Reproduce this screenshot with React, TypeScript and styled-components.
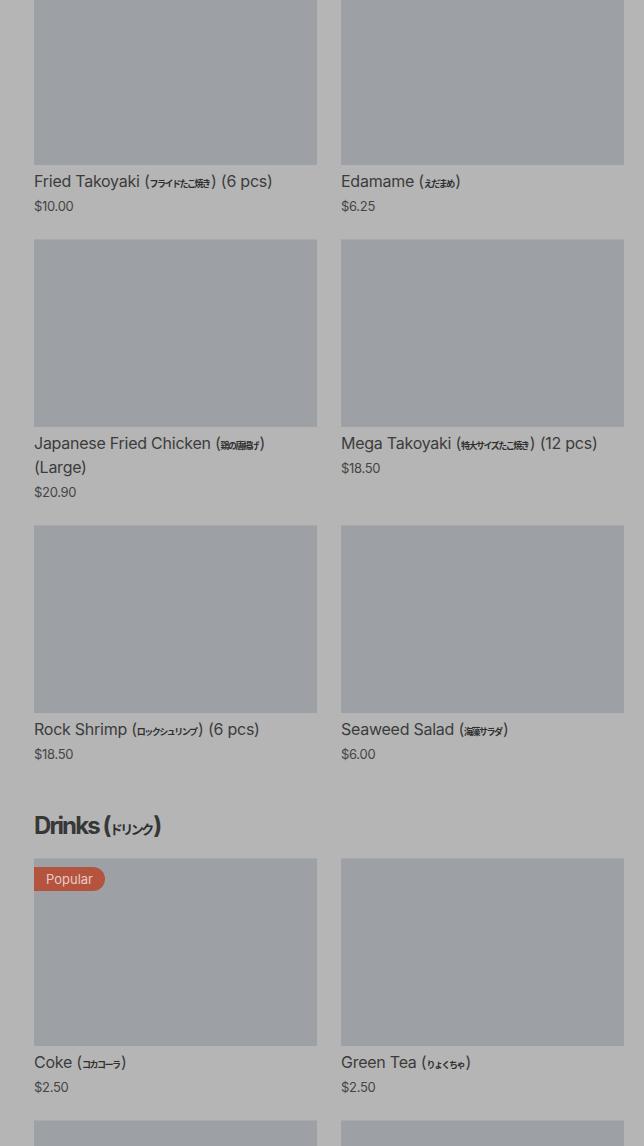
import React from "react";
import styled, { createGlobalStyle } from "styled-components";

const GlobalStyle = createGlobalStyle`
  html, body {
    margin: 0;
    padding: 0;
    background: #b5b5b5;
  }
  body {
    font-family: Inter, "Noto Sans", "Noto Sans CJK JP", sans-serif;
    color: #3b3b3b;
    overflow: hidden;
  }
`;

const Page = styled.main`
  background: #b5b5b5;
  height: 1146px;
  overflow: hidden;
  padding: 0 20px 0 34px;
  box-sizing: border-box;
`;

const Scroller = styled.div`
  margin-top: -23px;
`;

const Section = styled.section<{ $first?: boolean }>`
  margin-top: ${(p) => (p.$first ? "0" : "44px")};
`;

const SectionTitle = styled.h2`
  margin: 0 0 16px;
  font-size: 24px;
  line-height: 32px;
  font-weight: 700;
  letter-spacing: -1.9px;
  color: #373737;
`;

const Grid = styled.div`
  display: grid;
  grid-template-columns: 1fr 1fr;
  column-gap: 24px;
  row-gap: 21px;
`;

const Card = styled.article`
  display: flex;
  flex-direction: column;
`;

const Thumb = styled.div`
  position: relative;
  height: 188px;
  background: #9da0a4;
  border-top: 1px solid #a7a9ac;
  box-sizing: border-box;
`;

const Badge = styled.span`
  position: absolute;
  top: 8px;
  left: 0;
  height: 24px;
  padding: 0 12px;
  display: flex;
  align-items: center;
  background: #b4533e;
  color: #e9cbc3;
  font-size: 13px;
  border-radius: 0 12px 12px 0;
`;

const Name = styled.h3`
  margin: 4px 0 0;
  font-size: 16px;
  line-height: 24px;
  font-weight: 400;
  color: #3c3c3c;
  letter-spacing: -0.25px;
`;

const Native = styled.span<{ $big?: boolean }>`
  font-family: "Noto Sans CJK JP", sans-serif;
  font-size: ${(p) => (p.$big ? "13px" : "9px")};
  line-height: 0;
  font-weight: 700;
  letter-spacing: ${(p) => (p.$big ? "-2.5px" : "-1.5px")};
  color: #2f2f2f;
  padding-right: 1.5px;
`;

const Price = styled.div`
  margin-top: 1px;
  font-size: 13px;
  line-height: 24px;
  color: #454545;
  letter-spacing: -0.3px;
`;

type Item = {
  en: string;
  jp: string;
  suffix?: string;
  price: string;
  badge?: string;
};

const food: Item[] = [
  { en: "Fried Takoyaki", jp: "フライドたこ焼き", suffix: "(6 pcs)", price: "$10.00" },
  { en: "Edamame", jp: "えだまめ", price: "$6.25" },
  { en: "Japanese Fried Chicken", jp: "鶏の唐揚げ", suffix: "(Large)", price: "$20.90" },
  { en: "Mega Takoyaki", jp: "特大サイズたこ焼き", suffix: "(12 pcs)", price: "$18.50" },
  { en: "Rock Shrimp", jp: "ロックシュリンプ", suffix: "(6 pcs)", price: "$18.50" },
  { en: "Seaweed Salad", jp: "海藻サラダ", price: "$6.00" },
];

const drinks: Item[] = [
  { en: "Coke", jp: "コカコーラ", price: "$2.50", badge: "Popular" },
  { en: "Green Tea", jp: "りょくちゃ", price: "$2.50" },
  { en: "Ramune", jp: "ラムネ", price: "$3.50" },
  { en: "Calpico", jp: "カルピス", price: "$3.50" },
];

const MenuCard: React.FC<{ item: Item }> = ({ item }) => (
  <Card>
    <Thumb>{item.badge && <Badge>{item.badge}</Badge>}</Thumb>
    <Name>
      {item.en} (<Native>{item.jp}</Native>){item.suffix ? ` ${item.suffix}` : ""}
    </Name>
    <Price>{item.price}</Price>
  </Card>
);

export default function App() {
  return (
    <>
      <GlobalStyle />
      <Page>
        <Scroller>
          <Section $first>
            <Grid>
              {food.map((it) => (
                <MenuCard key={it.en} item={it} />
              ))}
            </Grid>
          </Section>
          <Section>
            <SectionTitle>
              Drinks (<Native $big>ドリンク</Native>)
            </SectionTitle>
            <Grid>
              {drinks.map((it) => (
                <MenuCard key={it.en} item={it} />
              ))}
            </Grid>
          </Section>
        </Scroller>
      </Page>
    </>
  );
}
